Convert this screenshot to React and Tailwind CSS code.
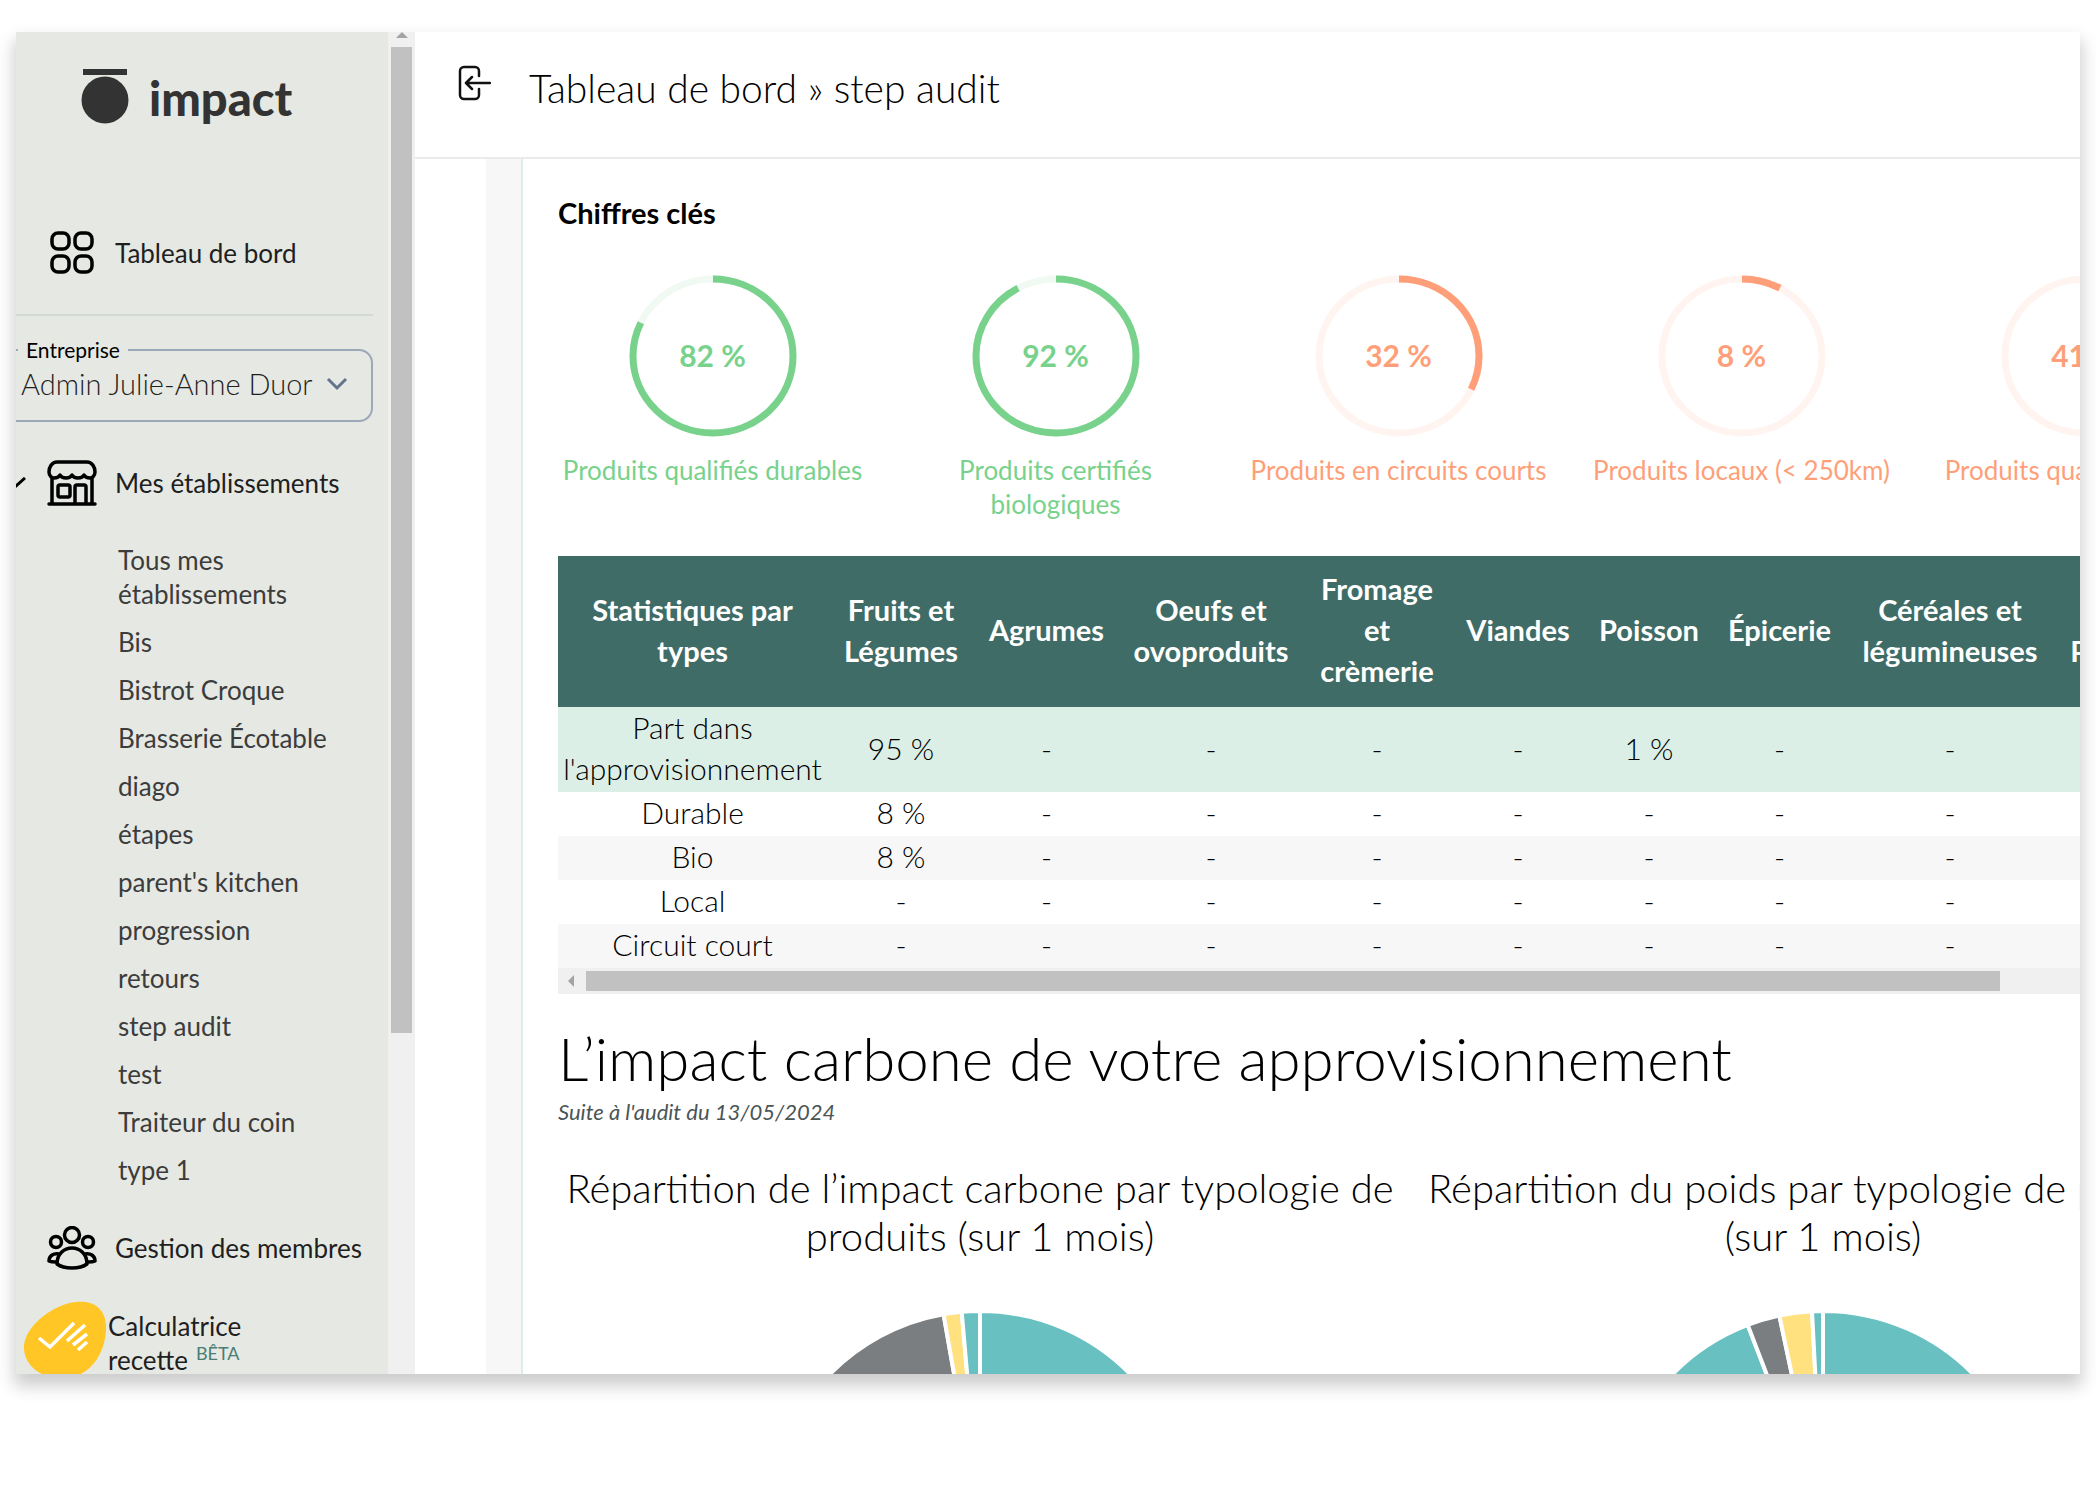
import React from "react";

const establishments = [
  "Tous mes établissements",
  "Bis",
  "Bistrot Croque",
  "Brasserie Écotable",
  "diago",
  "étapes",
  "parent's kitchen",
  "progression",
  "retours",
  "step audit",
  "test",
  "Traiteur du coin",
  "type 1",
];

const figures = [
  { value: 82, label: "Produits qualifiés durables", tone: "green" },
  { value: 92, label: "Produits certifiés biologiques", tone: "green" },
  { value: 32, label: "Produits en circuits courts", tone: "orange" },
  { value: 8, label: "Produits locaux (< 250km)", tone: "orange" },
  { value: 41, label: "Produits quantifiés bruts", tone: "orange" },
];

const columns = [
  { name: "Statistiques par types", width: "w-[269px]" },
  { name: "Fruits et Légumes", width: "w-[148px]" },
  { name: "Agrumes", width: "w-[143px]" },
  { name: "Oeufs et ovoproduits", width: "w-[186px]" },
  { name: "Fromage et crèmerie", width: "w-[146px]" },
  { name: "Viandes", width: "w-[136px]" },
  { name: "Poisson", width: "w-[126px]" },
  { name: "Épicerie", width: "w-[135px]" },
  { name: "Céréales et légumineuses", width: "w-[206px]" },
  { name: "Pain et Pâtisserie", width: "w-[160px]" },
];

const rows = [
  { name: "Part dans l'approvisionnement", cells: ["95 %", "-", "-", "-", "-", "1 %", "-", "-", "-", "-"], bg: "bg-[#dcefe6]" },
  { name: "Durable", cells: ["8 %", "-", "-", "-", "-", "-", "-", "-", "-", "-"], bg: "bg-white" },
  { name: "Bio", cells: ["8 %", "-", "-", "-", "-", "-", "-", "-", "-", "-"], bg: "bg-[#f7f7f7]" },
  { name: "Local", cells: ["-", "-", "-", "-", "-", "-", "-", "-", "-", "-"], bg: "bg-white" },
  { name: "Circuit court", cells: ["-", "-", "-", "-", "-", "-", "-", "-", "-", "-"], bg: "bg-[#f7f7f7]" },
];

function Logo() {
  return (
    <a href="#accueil" className="flex items-start gap-5 pl-[65px] text-[#333333]">
      <svg width="48" height="56" viewBox="0 0 48 56" fill="currentColor" aria-hidden="true">
        <rect x="2" y="1" width="44" height="6" />
        <circle cx="24" cy="32" r="23.5" />
      </svg>
      <span className="pt-[6px] text-[47px] leading-[48px] font-black">impact</span>
    </a>
  );
}

function GridIcon() {
  return (
    <svg width="50" height="46" viewBox="0 0 50 46" fill="none" stroke="#000" strokeWidth="3.5" aria-hidden="true">
      <rect x="5" y="3" width="17" height="16" rx="6" />
      <rect x="28" y="3" width="17" height="16" rx="6" />
      <rect x="5" y="26" width="17" height="16" rx="6" />
      <rect x="28" y="26" width="17" height="16" rx="6" />
    </svg>
  );
}

function StoreIcon() {
  return (
    <svg width="50" height="46" viewBox="0 0 50 46" fill="none" stroke="#000" strokeWidth="3.5" strokeLinecap="round" strokeLinejoin="round" aria-hidden="true">
      <path d="M10 2h30c5 0 8 5 8 10 0 4-3 6-5 6-3 0-5-1-6-3-1 2-3 3-6 3s-5-1-6-3c-1 2-3 3-6 3s-5-1-6-3c-1 2-3 3-6 3-2 0-5-2-5-6C2 7 5 2 10 2z" />
      <path d="M5 18v25M45 18v25" />
      <path d="M2 44h46" />
      <rect x="11" y="25" width="12" height="12" rx="2" />
      <path d="M28 43V27a2 2 0 0 1 2-2h7a2 2 0 0 1 2 2v16" />
    </svg>
  );
}

function MembersIcon() {
  return (
    <svg width="50" height="44" viewBox="0 0 50 44" fill="none" stroke="#000" strokeWidth="3.5" strokeLinecap="round" strokeLinejoin="round" aria-hidden="true">
      <circle cx="25" cy="9" r="7.5" />
      <circle cx="9" cy="16" r="5.5" />
      <circle cx="41" cy="16" r="5.5" />
      <path d="M10 38c0-10 7-16 15-16s15 6 15 16c-4 3-9 4-15 4s-11-1-15-4z" />
      <path d="M12 28c-6-1-10 2-10 7 2 1 5 1 8 1M38 28c6-1 10 2 10 7-2 1-5 1-8 1" />
    </svg>
  );
}

function ConsentButton() {
  return (
    <button type="button" aria-label="Préférences de cookies" className="absolute top-0 left-2 h-[82px] w-[82px]">
      <svg width="82" height="82" viewBox="0 0 82 82" aria-hidden="true">
        <path d="M52 1C66-1 81 5 82 24c1 22-11 44-28 50-9 4-24 4-34 0C8 69-1 58 0 44 2 24 30 3 52 1z" fill="#ffc626" />
        <path d="M15 37l11 9 24-24M43 40l18-16M49 44l14-11M54 49l9-8" fill="none" stroke="#fff" strokeWidth="3.5" />
      </svg>
    </button>
  );
}

function Sidebar() {
  return (
    <aside className="flex w-[399px] shrink-0">
      <div className="flex w-[372px] flex-col overflow-hidden bg-[#e6e9e3] pt-9 text-[#1f1f1f]">
        <Logo />
        <nav className="flex flex-col pt-[106px] text-[26px] leading-[34px]">
          <a href="#tableau" className="flex items-center gap-[18px] pl-[31px]">
            <GridIcon />
            <span>Tableau de bord</span>
          </a>
          <hr className="mt-[38px] mr-[15px] border-t-2 border-[#d3d9d7]" />
          <fieldset className="mt-[22px] mr-[15px] -ml-4 h-[84px] rounded-[14px] border-2 border-[#9ba8b8] pl-4">
            <legend className="px-2 text-[21px] leading-6 text-black">
              <label htmlFor="entreprise">Entreprise</label>
            </legend>
            <div className="flex items-center pt-[2px]">
              <select id="entreprise" className="w-[308px] appearance-none overflow-hidden bg-transparent pl-[3px] text-[29px] leading-10 font-light">
                <option>Admin Julie-Anne Duor</option>
              </select>
              <svg width="22" height="14" viewBox="0 0 22 14" fill="none" stroke="#64748b" strokeWidth="3" aria-hidden="true">
                <path d="M2 2l9 9 9-9" />
              </svg>
            </div>
          </fieldset>
          <a href="#etablissements" className="mt-[38px] flex items-center">
            <svg width="10" height="12" viewBox="0 0 10 12" fill="none" stroke="#000" strokeWidth="3" aria-hidden="true">
              <path d="M-8 1l8 8 9-8" />
            </svg>
            <span className="pl-[21px]"><StoreIcon /></span>
            <span className="pl-[18px]">Mes établissements</span>
          </a>
          <ul className="flex flex-col gap-[14px] pt-[37px] pl-[102px] text-[#3c3c3c]">
            {establishments.map((name) => (
              <li key={name} className="pr-10">
                <a href="#etablissement">{name}</a>
              </li>
            ))}
          </ul>
          <a href="#membres" className="mt-[39px] flex items-center gap-[18px] pl-[31px]">
            <MembersIcon />
            <span>Gestion des membres</span>
          </a>
          <div className="relative mt-[31px]">
            <a href="#calculatrice" className="flex flex-col pt-2 pl-[92px]">
              <span>Calculatrice</span>
              <span className="flex items-start gap-2">
                recette
                <span className="text-lg leading-5 text-[#4a7d76]">BÊTA</span>
              </span>
            </a>
            <ConsentButton />
          </div>
        </nav>
      </div>
      <div className="flex w-[27px] flex-col items-center bg-[#f0f0f0]">
        <svg width="12" height="15" viewBox="0 0 12 15" fill="#a3a3a3" aria-hidden="true">
          <path d="M0 6L6 0l6 6z" />
        </svg>
        <div className="h-[986px] w-[21px] bg-[#c1c1c1]" />
      </div>
    </aside>
  );
}

function Header() {
  return (
    <header className="flex h-[127px] shrink-0 items-start gap-[38px] border-b-2 border-[#ebebeb] pt-[33px] pl-[43px]">
      <button type="button" aria-label="Replier le menu">
        <svg width="33" height="36" viewBox="0 0 33 36" fill="none" stroke="#111" strokeWidth="2.5" strokeLinecap="round" strokeLinejoin="round" aria-hidden="true">
          <path d="M21 11V6a4 4 0 0 0-4-4H6a4 4 0 0 0-4 4v24a4 4 0 0 0 4 4h11a4 4 0 0 0 4-4v-6" />
          <path d="M32 18H9M14 12l-6 6 6 6" />
        </svg>
      </button>
      <h1 className="text-[39px] leading-[46px] font-light">Tableau de bord » step audit</h1>
    </header>
  );
}

function Gauge({ value, label, tone }) {
  const green = tone === "green";
  const color = green ? "#78d28c" : "#ff9f7a";
  return (
    <li className={"flex w-[309px] flex-col items-center text-center " + (green ? "text-[#78d28c]" : "text-[#ff9f7a]")}>
      <div className="grid place-items-center">
        <svg width="168" height="162" viewBox="0 0 168 162" className="col-start-1 row-start-1" fill="none" strokeWidth="7" aria-hidden="true">
          <ellipse cx="84" cy="81" rx="80" ry="77" stroke={green ? "#f0f9f2" : "#fff4f0"} />
          <path
            d="M84 4A80 77 0 0 1 84 158A80 77 0 0 1 84 4"
            pathLength="100"
            stroke={color}
            strokeDasharray={value + " 100"}
          />
        </svg>
        <span className="col-start-1 row-start-1 pb-[2px] text-[30px] leading-9 font-bold">{value} %</span>
      </div>
      <span className="mt-4 text-[26px] leading-[34px]">{label}</span>
    </li>
  );
}

function StatsTable() {
  return (
    <div className="mt-[35px] overflow-hidden">
      <table className="w-[1655px] table-fixed text-center text-[30px] leading-[41px]">
        <thead className="bg-[#3f6c66] text-white">
          <tr className="h-[151px]">
            {columns.map((c) => (
              <th key={c.name} scope="col" className={c.width + " px-2 pb-1 text-[29px] font-bold"}>{c.name}</th>
            ))}
          </tr>
        </thead>
        <tbody className="font-light">
          {rows.map((r) => (
            <tr key={r.name} className={r.bg}>
              <th scope="row" className="pb-[3px] font-light">{r.name}</th>
              {r.cells.map((v, i) => (
                <td key={i} className="pb-[3px]">{v}</td>
              ))}
            </tr>
          ))}
        </tbody>
      </table>
      <div className="flex h-[26px] items-center bg-[#f0f0f0] pl-[10px]">
        <svg width="18" height="12" viewBox="0 0 18 12" fill="#a3a3a3" aria-hidden="true">
          <path d="M6 0v12L0 6z" />
        </svg>
        <div className="mr-20 h-5 flex-1 bg-[#c1c1c1]" />
      </div>
    </div>
  );
}

function Pie({ slices, name }) {
  const point = (deg) => {
    const a = (deg * Math.PI) / 180;
    return 212 + 210 * Math.sin(a) + " " + (212 - 210 * Math.cos(a));
  };
  return (
    <svg role="img" aria-label={name} width="424" height="424" viewBox="0 0 424 424" className="shrink-0" stroke="#fff" strokeWidth="4">
      {slices.map(([from, to, fill]) => (
        <path
          key={from}
          fill={fill}
          d={"M212 212L" + point(from) + "A210 210 0 " + (to - from > 180 ? 1 : 0) + " 1 " + point(to) + "Z"}
        />
      ))}
    </svg>
  );
}

const carbonSlices = [
  [0, 200, "#68c0c0"],
  [200, 350, "#7a7e81"],
  [350, 355, "#ffe180"],
  [355, 360, "#68c0c0"],
];

const weightSlices = [
  [0, 200, "#68c0c0"],
  [200, 339, "#68c0c0"],
  [339, 348, "#7a7e81"],
  [348, 357, "#ffe180"],
  [357, 360, "#68c0c0"],
];

export default function App() {
  return (
    <div className="flex h-screen flex-col overflow-hidden bg-white px-4 pt-8 pb-[134px] font-[Lato,'Noto_Sans',sans-serif] text-black">
      <div className="flex min-h-0 flex-1 overflow-hidden bg-white shadow-[0_10px_16px_2px_rgba(0,0,0,0.2)]">
        <Sidebar />
        <div className="flex min-w-0 flex-1 flex-col">
          <Header />
          <div className="flex min-h-0 flex-1 pl-[71px]">
            <div className="w-[35px] shrink-0 bg-[#f7f7f7]" />
            <main className="min-w-0 flex-1 overflow-hidden border-l-2 border-[#dcefe6] pt-9 pl-[35px]">
              <h2 className="text-[29px] leading-9 font-bold">Chiffres clés</h2>
              <ul className="mt-11 flex w-max gap-[34px]">
                {figures.map((f) => (
                  <Gauge key={f.label} {...f} />
                ))}
              </ul>
              <StatsTable />
              <h2 className="mt-[30px] text-[60px] leading-[68px] font-light whitespace-nowrap">
                L’impact carbone de votre approvisionnement
              </h2>
              <p className="mt-1 text-[22px] leading-8 text-[#4a5556] italic">Suite à l'audit du 13/05/2024</p>
              <div className="mt-9 flex w-max gap-5 text-[40px] leading-[48px] font-light whitespace-nowrap">
                <section className="flex w-[844px] flex-col items-center gap-[49px] text-center">
                  <h3>
                    Répartition de l’impact carbone par typologie de
                    <br />
                    produits (sur 1 mois)
                  </h3>
                  <Pie name="Impact carbone par typologie de produits" slices={carbonSlices} />
                </section>
                <section className="flex w-[802px] flex-col items-center gap-[49px] text-center">
                  <h3>
                    Répartition du poids par typologie de produits
                    <br />
                    (sur 1 mois)
                  </h3>
                  <Pie name="Poids par typologie de produits" slices={weightSlices} />
                </section>
              </div>
            </main>
          </div>
        </div>
      </div>
    </div>
  );
}
